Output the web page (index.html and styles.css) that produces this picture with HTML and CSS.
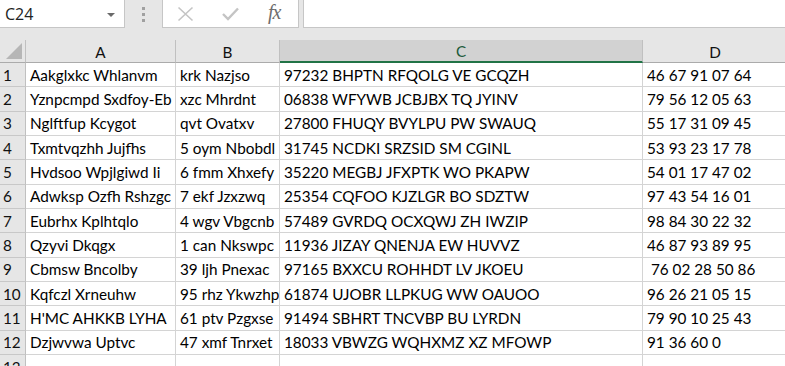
FILE: index.html
```html
<!DOCTYPE html>
<html>
<head>
<meta charset="utf-8">
<link rel="stylesheet" href="styles.css">
</head>
<body>
<div class="app">
  <div class="toolbar">
    <div class="namebox"><span class="name">C24</span><span class="caret"></span></div>
    <div class="grip"><i></i><i></i><i></i></div>
    <div class="fnbox">
      <svg class="ico" width="17" height="16" viewBox="0 0 17 16"><path d="M1.5 1.5 L15.5 14.5 M15.5 1.5 L1.5 14.5" stroke="#c4c4c4" stroke-width="1.6" fill="none"/></svg>
      <svg class="ico" width="17" height="16" viewBox="0 0 17 16"><path d="M1 8 L6 13 L16 2.5" stroke="#c4c4c4" stroke-width="2.4" fill="none"/></svg>
      <span class="fx">fx</span>
    </div>
    <div class="formula"></div>
  </div>
  <div class="sheet">
    <div class="corner"><span class="tri"></span></div>
    <div class="ch">A</div>
    <div class="ch">B</div>
    <div class="ch sel">C</div>
    <div class="ch last">D</div>

    <div class="rh">1</div><div class="c">Aakglxkc Whlanvm</div><div class="c">krk Nazjso</div><div class="c">97232 BHPTN RFQOLG VE GCQZH</div><div class="c last">46 67 91 07 64</div>
    <div class="rh">2</div><div class="c">Yznpcmpd Sxdfoy-Eb</div><div class="c">xzc Mhrdnt</div><div class="c">06838 WFYWB JCBJBX TQ JYINV</div><div class="c last">79 56 12 05 63</div>
    <div class="rh">3</div><div class="c">Nglftfup Kcygot</div><div class="c">qvt Ovatxv</div><div class="c">27800 FHUQY BVYLPU PW SWAUQ</div><div class="c last">55 17 31 09 45</div>
    <div class="rh">4</div><div class="c">Txmtvqzhh Jujfhs</div><div class="c">5 oym Nbobdl</div><div class="c">31745 NCDKI SRZSID SM CGINL</div><div class="c last">53 93 23 17 78</div>
    <div class="rh">5</div><div class="c">Hvdsoo Wpjlgiwd Ii</div><div class="c">6 fmm Xhxefy</div><div class="c">35220 MEGBJ JFXPTK WO PKAPW</div><div class="c last">54 01 17 47 02</div>
    <div class="rh">6</div><div class="c">Adwksp Ozfh Rshzgc</div><div class="c">7 ekf Jzxzwq</div><div class="c">25354 CQFOO KJZLGR BO SDZTW</div><div class="c last">97 43 54 16 01</div>
    <div class="rh">7</div><div class="c">Eubrhx Kplhtqlo</div><div class="c">4 wgv Vbgcnb</div><div class="c">57489 GVRDQ OCXQWJ ZH IWZIP</div><div class="c last">98 84 30 22 32</div>
    <div class="rh">8</div><div class="c">Qzyvi Dkqgx</div><div class="c">1 can Nkswpc</div><div class="c">11936 JIZAY QNENJA EW HUVVZ</div><div class="c last">46 87 93 89 95</div>
    <div class="rh">9</div><div class="c">Cbmsw Bncolby</div><div class="c">39 ljh Pnexac</div><div class="c">97165 BXXCU ROHHDT LV JKOEU</div><div class="c last">&nbsp;76 02 28 50 86</div>
    <div class="rh">10</div><div class="c">Kqfczl Xrneuhw</div><div class="c">95 rhz Ykwzhp</div><div class="c">61874 UJOBR LLPKUG WW OAUOO</div><div class="c last">96 26 21 05 15</div>
    <div class="rh">11</div><div class="c">H'MC AHKKB LYHA</div><div class="c">61 ptv Pzgxse</div><div class="c">91494 SBHRT TNCVBP BU LYRDN</div><div class="c last">79 90 10 25 43</div>
    <div class="rh">12</div><div class="c">Dzjwvwa Uptvc</div><div class="c">47 xmf Tnrxet</div><div class="c">18033 VBWZG WQHXMZ XZ MFOWP</div><div class="c last">91 36 60 0</div>
    <div class="rh">13</div><div class="c"></div><div class="c"></div><div class="c"></div><div class="c last"></div>
  </div>
</div>
</body>
</html>
```
FILE: styles.css
```css
* { box-sizing: border-box; }
html, body { margin: 0; padding: 0; background: #ffffff; overflow: hidden; }
.app {
  width: 787px;
  height: 366px;
  background: #e6e6e6;
  font-family: Lato, "Open Sans", sans-serif;
  overflow: hidden;
}
.toolbar {
  height: 40px;
  display: flex;
  align-items: flex-start;
  background: #e6e6e6;
}
.namebox {
  width: 125px;
  height: 28px;
  background: #fff;
  border-right: 1px solid #c6c6c6;
  border-bottom: 1px solid #c6c6c6;
  display: flex;
  align-items: center;
  justify-content: space-between;
  padding: 0 9px 0 5px;
}
.name { font-family: "Open Sans", sans-serif; font-size: 16px; color: #222; }
.caret {
  width: 0; height: 0;
  border-left: 4px solid transparent;
  border-right: 4px solid transparent;
  border-top: 4px solid #6a6a6a;
  margin-top: 2px;
}
.grip {
  width: 37px;
  height: 28px;
  display: flex;
  flex-direction: column;
  align-items: center;
  justify-content: center;
  gap: 3px;
}
.grip i { display: block; width: 3px; height: 3px; background: #a0a0a0; }
.fnbox {
  width: 137px;
  height: 28px;
  background: #fff;
  border-left: 1px solid #c6c6c6;
  border-right: 1px solid #c6c6c6;
  border-bottom: 1px solid #c6c6c6;
  display: flex;
  align-items: center;
  padding-left: 14px;
  gap: 28px;
}
.fx {
  font-family: "Liberation Serif", serif;
  font-style: italic;
  font-size: 20px;
  color: #6e6e6e;
  margin-left: 1px;
  letter-spacing: -1px;
  margin-top: -2px;
}
.formula {
  flex: 1;
  height: 28px;
  margin-left: 4px;
  background: #fff;
  border-left: 1px solid #c6c6c6;
  border-bottom: 1px solid #c6c6c6;
}
.sheet {
  display: grid;
  grid-template-columns: 26px 150px 104px 363px 144px;
  grid-template-rows: 23px repeat(13, 24.33px);
  background: #fff;
}
.corner {
  background: #e6e6e6;
  border-right: 1px solid #c0c0c0;
  border-bottom: 1px solid #ababab;
  position: relative;
}
.tri {
  position: absolute;
  right: 3px;
  bottom: 3px;
  width: 0; height: 0;
  border-left: 16px solid transparent;
  border-bottom: 16px solid #b6b6b6;
}
.ch {
  background: #e6e6e6;
  border-right: 1px solid #c0c0c0;
  border-bottom: 1px solid #ababab;
  display: flex;
  align-items: center;
  justify-content: center;
  font-size: 15.3px;
  color: #111;
  padding-top: 1px;
}
.ch.sel {
  background: #d2d2d2;
  border-bottom: 2px solid #217346;
  color: #1c5a3a;
}
.ch.last { border-right: none; }
.rh {
  background: #e6e6e6;
  border-right: 1px solid #c0c0c0;
  border-bottom: 1px solid #c8c8c8;
  display: flex;
  align-items: center;
  padding-left: 3px;
  font-size: 15.3px;
  color: #111;
}
.c {
  border-right: 1px solid #d4d4d4;
  border-bottom: 1px solid #d4d4d4;
  display: flex;
  align-items: center;
  padding-left: 4px;
  font-size: 15.3px;
  color: #000;
  white-space: pre;
  overflow: hidden;
}
.c.last { border-right: none; }
```
